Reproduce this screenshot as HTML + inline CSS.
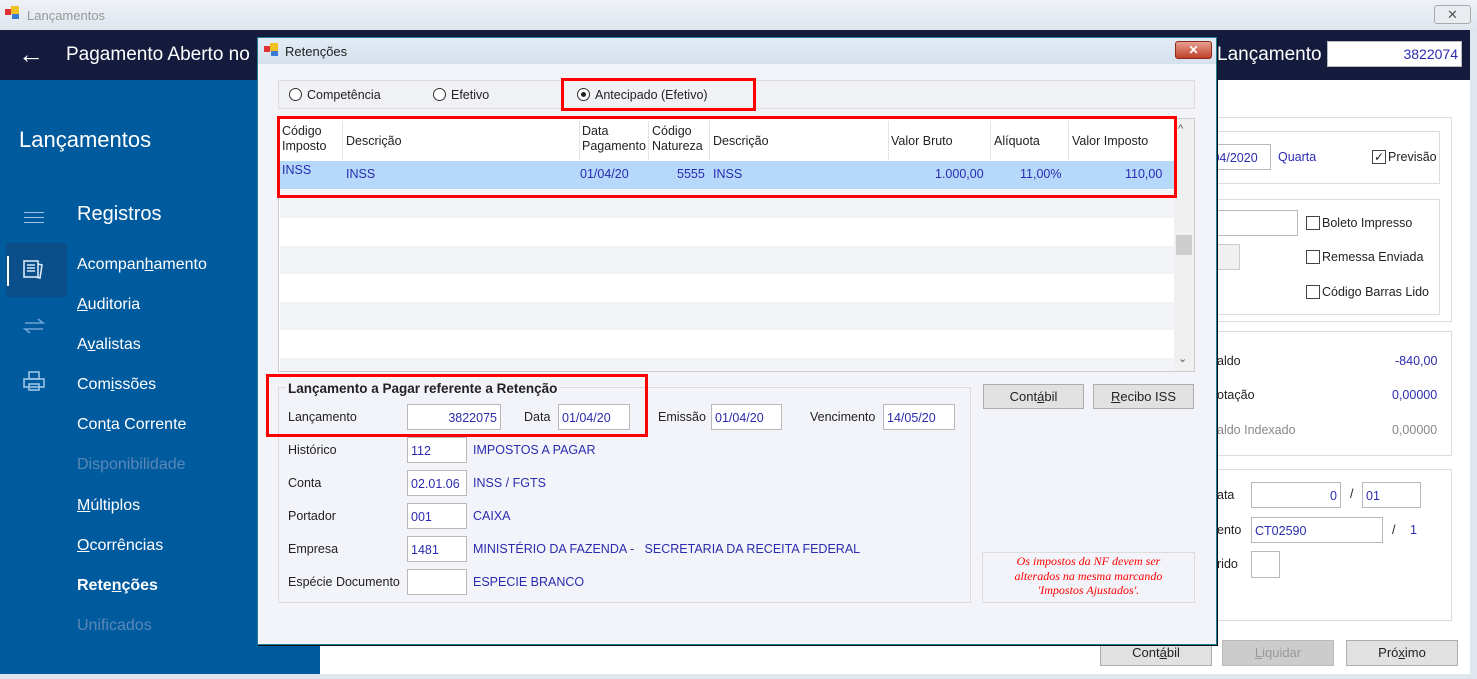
<!DOCTYPE html>
<html><head><meta charset="utf-8"><style>
*{margin:0;padding:0;box-sizing:border-box}
body{width:1477px;height:679px;overflow:hidden;position:relative;background:#fff;font-family:"Liberation Sans",sans-serif;font-size:12.5px;color:#222}
.a{position:absolute;white-space:nowrap}
.inp{position:absolute;background:#fff;border:1px solid #b8b8b8;color:#2b2bb0;padding:6px 3px 0;font-size:12.5px;white-space:nowrap}
.r{text-align:right}
.blue{color:#2b2bb0}
.btn{position:absolute;background:#e1e1e1;border:1px solid #adadad;text-align:center;font-size:13px;padding-top:4px}
.grp{position:absolute;border:1px solid #dcdcdc}
.red{position:absolute;border:3px solid #f00}
.nav{position:absolute;left:77px;color:#fff;font-size:16px}
.cb{position:absolute;width:14px;height:14px;border:1px solid #444;background:#fff}
.radio{position:absolute;width:13px;height:13px;border:1px solid #333;border-radius:50%;background:#fff}
</style></head><body>
<div class="a" style="left:0;top:0;width:1477px;height:30px;background:linear-gradient(#eef2f7,#dfe6ee)"></div>
<div class="a" style="left:5px;top:9px;width:6px;height:6px;background:#d33"></div>
<div class="a" style="left:11px;top:6px;width:8px;height:8px;background:#f0c020"></div>
<div class="a" style="left:12px;top:14px;width:7px;height:5px;background:#3a7bd5"></div>
<div class="a" style="left:27px;top:8px;color:#999;font-size:13px">Lançamentos</div>
<div class="a" style="left:1434px;top:5px;width:37px;height:19px;border:1px solid #aaa;border-radius:3px;background:#e9edf2;text-align:center;color:#555;font-size:13px;line-height:17px">✕</div>
<div class="a" style="left:0;top:30px;width:1472px;height:50px;background:#141b3d"></div>
<div class="a" style="left:18px;top:39px;color:#fff;font-size:26px">←</div>
<div class="a" style="left:66px;top:44px;color:#fff;font-size:19px">Pagamento Aberto no</div>
<div class="a" style="left:1217px;top:44px;color:#fff;font-size:19px">Lançamento</div>
<div class="inp r" style="left:1327px;top:41px;width:135px;height:26px;font-size:14px;padding-top:4px">3822074</div>
<div class="a" style="left:0;top:80px;width:320px;height:599px;background:#005a9e"></div>
<div class="a" style="left:19px;top:127px;color:#fff;font-size:22px">Lançamentos</div>
<div class="a" style="left:24px;top:212px;width:20px;height:1px;background:#9cc3e6;box-shadow:0 5px 0 #9cc3e6,0 10px 0 #9cc3e6"></div>
<div class="a" style="left:77px;top:203px;color:#fff;font-size:20px">Registros</div>
<div class="a" style="left:6px;top:243px;width:61px;height:54px;background:#0a4f8a"></div>
<div class="a" style="left:7px;top:256px;width:2px;height:30px;background:#fff"></div>
<svg class="a" style="left:22px;top:258px" width="24" height="24" viewBox="0 0 24 24" fill="none" stroke="#d8e8f8" stroke-width="1.6"><rect x="2" y="3" width="14" height="16"/><path d="M5 7h8M5 10h8M5 13h8M16 6l4 1-2 13-4-1"/></svg>
<svg class="a" style="left:22px;top:314px" width="24" height="24" viewBox="0 0 24 24" fill="none" stroke="#6fa3d6" stroke-width="1.6"><path d="M3 9h18l-5-4M21 15H3l5 4"/></svg>
<svg class="a" style="left:22px;top:370px" width="24" height="24" viewBox="0 0 24 24" fill="none" stroke="#9cc3e6" stroke-width="1.6"><rect x="7" y="2" width="10" height="7"/><rect x="2" y="9" width="20" height="8"/><rect x="7" y="14" width="10" height="6"/></svg>
<div class="nav" style="top:256px">Acompan<u>h</u>amento</div>
<div class="nav" style="top:296px"><u>A</u>uditoria</div>
<div class="nav" style="top:336px">A<u>v</u>alistas</div>
<div class="nav" style="top:376px">Com<u>i</u>ssões</div>
<div class="nav" style="top:416px">Con<u>t</u>a Corrente</div>
<div class="nav" style="top:456px;color:#5a88b8">Disponibilidade</div>
<div class="nav" style="top:497px"><u>M</u>últiplos</div>
<div class="nav" style="top:537px"><u>O</u>corrências</div>
<div class="nav" style="top:577px;font-weight:bold">Rete<u>n</u>ções</div>
<div class="nav" style="top:617px;color:#5a88b8">Unificados</div>
<div class="a" style="left:1470px;top:30px;width:7px;height:649px;background:#dfe6ee"></div>
<div class="a" style="left:0;top:674px;width:1477px;height:5px;background:#dfe6ee"></div>
<div class="grp" style="left:1190px;top:117px;width:262px;height:205px"></div>
<div class="grp" style="left:1190px;top:131px;width:250px;height:53px"></div>
<div class="inp" style="left:1205px;top:144px;width:66px;height:26px">/04/2020</div>
<div class="a blue" style="left:1278px;top:150px">Quarta</div>
<div class="cb" style="left:1372px;top:150px;text-align:center;font-size:12px;line-height:12px">✓</div>
<div class="a" style="left:1388px;top:150px">Previsão</div>
<div class="grp" style="left:1190px;top:199px;width:250px;height:116px"></div>
<div class="inp" style="left:1205px;top:210px;width:93px;height:26px"></div>
<div class="a" style="left:1205px;top:244px;width:35px;height:26px;border:1px solid #ccc;background:#f0f0f0"></div>
<div class="cb" style="left:1306px;top:216px"></div><div class="a" style="left:1322px;top:216px">Boleto Impresso</div>
<div class="cb" style="left:1306px;top:250px"></div><div class="a" style="left:1322px;top:250px">Remessa Enviada</div>
<div class="cb" style="left:1306px;top:285px"></div><div class="a" style="left:1322px;top:285px">Código Barras Lido</div>
<div class="grp" style="left:1190px;top:331px;width:262px;height:125px"></div>
<div class="a" style="left:1217px;top:354px">aldo</div><div class="a blue" style="left:1395px;top:354px">-840,00</div>
<div class="a" style="left:1217px;top:388px">otação</div><div class="a blue" style="left:1392px;top:388px">0,00000</div>
<div class="a" style="left:1217px;top:423px;color:#888">aldo Indexado</div><div class="a" style="left:1392px;top:423px;color:#888">0,00000</div>
<div class="grp" style="left:1190px;top:469px;width:262px;height:152px"></div>
<div class="a" style="left:1217px;top:488px">ata</div>
<div class="inp r" style="left:1251px;top:482px;width:90px;height:26px">0</div>
<div class="a" style="left:1350px;top:487px">/</div>
<div class="inp" style="left:1362px;top:482px;width:59px;height:26px">01</div>
<div class="a" style="left:1217px;top:523px">ento</div>
<div class="inp" style="left:1251px;top:517px;width:132px;height:26px">CT02590</div>
<div class="a" style="left:1392px;top:523px">/</div><div class="a blue" style="left:1410px;top:523px">1</div>
<div class="a" style="left:1217px;top:557px">rido</div>
<div class="inp" style="left:1251px;top:551px;width:29px;height:27px"></div>
<div class="btn" style="left:1100px;top:640px;width:112px;height:26px">Cont<u>á</u>bil</div>
<div class="btn" style="left:1222px;top:640px;width:112px;height:26px;background:#ccc;color:#999;border-color:#bbb"><u>L</u>iquidar</div>
<div class="btn" style="left:1346px;top:640px;width:112px;height:26px">Pró<u>x</u>imo</div>
<div class="a" style="left:257px;top:37px;width:960px;height:608px;background:#f2f4f9;border:1px solid #1e7f96;box-shadow:1px 1px 0 #111"></div>
<div class="a" style="left:258px;top:38px;width:958px;height:26px;background:linear-gradient(#e4ecf5,#d6e1ee)"></div>
<div class="a" style="left:264px;top:46px;width:6px;height:6px;background:#d33"></div>
<div class="a" style="left:270px;top:43px;width:8px;height:8px;background:#f0c020"></div>
<div class="a" style="left:271px;top:51px;width:7px;height:5px;background:#3a7bd5"></div>
<div class="a" style="left:285px;top:44px;font-size:13px">Retenções</div>
<div class="a" style="left:1175px;top:41px;width:37px;height:18px;border-radius:3px;background:linear-gradient(#e8a090,#c0402a);border:1px solid #8a2a1a;color:#fff;text-align:center;font-size:12px;line-height:16px;font-weight:bold">✕</div>
<div class="grp" style="left:278px;top:80px;width:917px;height:29px;background:#f0f1f5"></div>
<div class="radio" style="left:289px;top:88px"></div><div class="a" style="left:307px;top:88px">Competência</div>
<div class="radio" style="left:433px;top:88px"></div><div class="a" style="left:451px;top:88px">Efetivo</div>
<div class="radio" style="left:577px;top:88px"><div style="position:absolute;left:3px;top:3px;width:5px;height:5px;border-radius:50%;background:#222"></div></div><div class="a" style="left:595px;top:88px">Antecipado (Efetivo)</div>
<div class="red" style="left:561px;top:78px;width:195px;height:33px"></div>
<div class="a" style="left:278px;top:118px;width:917px;height:254px;background:#fff;border:1px solid #ccc"></div>
<div class="a" style="left:280px;top:190px;width:894px;height:28px;background:#f3f4f8"></div>
<div class="a" style="left:280px;top:246px;width:894px;height:28px;background:#f3f4f8"></div>
<div class="a" style="left:280px;top:302px;width:894px;height:28px;background:#f3f4f8"></div>
<div class="a" style="left:280px;top:358px;width:894px;height:13px;background:#f3f4f8"></div>
<div class="a" style="left:1174px;top:119px;width:20px;height:252px;background:#f0f0f0"></div>
<div class="a" style="left:1176px;top:235px;width:16px;height:20px;background:#cdcdcd"></div>
<div class="a" style="left:1178px;top:123px;color:#555;font-size:11px">^</div>
<div class="a" style="left:1178px;top:352px;color:#555;font-size:11px">⌄</div>
<div class="a" style="left:280px;top:161px;width:894px;height:28px;background:#b5d8fb"></div>
<div class="a" style="left:342px;top:121px;width:1px;height:39px;background:#e4e4e4;box-shadow:237px 0 0 #e4e4e4,306px 0 0 #e4e4e4,367px 0 0 #e4e4e4,546px 0 0 #e4e4e4,648px 0 0 #e4e4e4,726px 0 0 #e4e4e4"></div>
<div class="a" style="left:282px;top:124px;line-height:15px">Código<br>Imposto</div>
<div class="a" style="left:346px;top:134px">Descrição</div>
<div class="a" style="left:582px;top:124px;line-height:15px">Data<br>Pagamento</div>
<div class="a" style="left:652px;top:124px;line-height:15px">Código<br>Natureza</div>
<div class="a" style="left:713px;top:134px">Descrição</div>
<div class="a" style="left:891px;top:134px">Valor Bruto</div>
<div class="a" style="left:994px;top:134px">Alíquota</div>
<div class="a" style="left:1072px;top:134px">Valor Imposto</div>
<div class="a blue" style="left:282px;top:163px">INSS</div>
<div class="a blue" style="left:346px;top:167px">INSS</div>
<div class="a blue" style="left:580px;top:167px">01/04/20</div>
<div class="a blue" style="left:677px;top:167px">5555</div>
<div class="a blue" style="left:713px;top:167px">INSS</div>
<div class="a blue" style="left:935px;top:167px">1.000,00</div>
<div class="a blue" style="left:1020px;top:167px">11,00%</div>
<div class="a blue" style="left:1125px;top:167px">110,00</div>
<div class="red" style="left:277px;top:116px;width:900px;height:82px"></div>
<div class="grp" style="left:278px;top:387px;width:693px;height:216px"></div>
<div class="a" style="left:286px;top:381px;font-weight:bold;font-size:13.5px;background:#f2f4f9;padding:0 2px">Lançamento a Pagar referente a Retenção</div>
<div class="a" style="left:288px;top:410px">Lançamento</div>
<div class="inp r" style="left:407px;top:404px;width:94px;height:26px">3822075</div>
<div class="a" style="left:524px;top:410px">Data</div>
<div class="inp" style="left:558px;top:404px;width:72px;height:26px">01/04/20</div>
<div class="a" style="left:658px;top:410px">Emissão</div>
<div class="inp" style="left:711px;top:404px;width:71px;height:26px">01/04/20</div>
<div class="a" style="left:810px;top:410px">Vencimento</div>
<div class="inp" style="left:883px;top:404px;width:72px;height:26px">14/05/20</div>
<div class="red" style="left:266px;top:374px;width:382px;height:63px"></div>
<div class="a" style="left:288px;top:443px">Histórico</div><div class="inp" style="left:407px;top:437px;width:60px;height:26px">112</div><div class="a blue" style="left:473px;top:443px">IMPOSTOS A PAGAR</div>
<div class="a" style="left:288px;top:476px">Conta</div><div class="inp" style="left:407px;top:470px;width:60px;height:26px">02.01.06</div><div class="a blue" style="left:473px;top:476px">INSS / FGTS</div>
<div class="a" style="left:288px;top:509px">Portador</div><div class="inp" style="left:407px;top:503px;width:60px;height:26px">001</div><div class="a blue" style="left:473px;top:509px">CAIXA</div>
<div class="a" style="left:288px;top:542px">Empresa</div><div class="inp" style="left:407px;top:536px;width:60px;height:26px">1481</div><div class="a blue" style="left:473px;top:542px">MINISTÉRIO DA FAZENDA -&nbsp;&nbsp; SECRETARIA DA RECEITA FEDERAL</div>
<div class="a" style="left:288px;top:575px">Espécie Documento</div><div class="inp" style="left:407px;top:569px;width:60px;height:26px"></div><div class="a blue" style="left:473px;top:575px">ESPECIE BRANCO</div>
<div class="btn" style="left:983px;top:384px;width:101px;height:25px">Cont<u>á</u>bil</div>
<div class="btn" style="left:1093px;top:384px;width:101px;height:25px"><u>R</u>ecibo ISS</div>
<div class="grp" style="left:982px;top:552px;width:213px;height:51px;text-align:center;color:#f00;font-family:'Liberation Serif',serif;font-style:italic;font-size:12px;line-height:14.5px;padding-top:1px">Os impostos da NF devem ser<br>alterados na mesma marcando<br>'Impostos Ajustados'.</div>
</body></html>
